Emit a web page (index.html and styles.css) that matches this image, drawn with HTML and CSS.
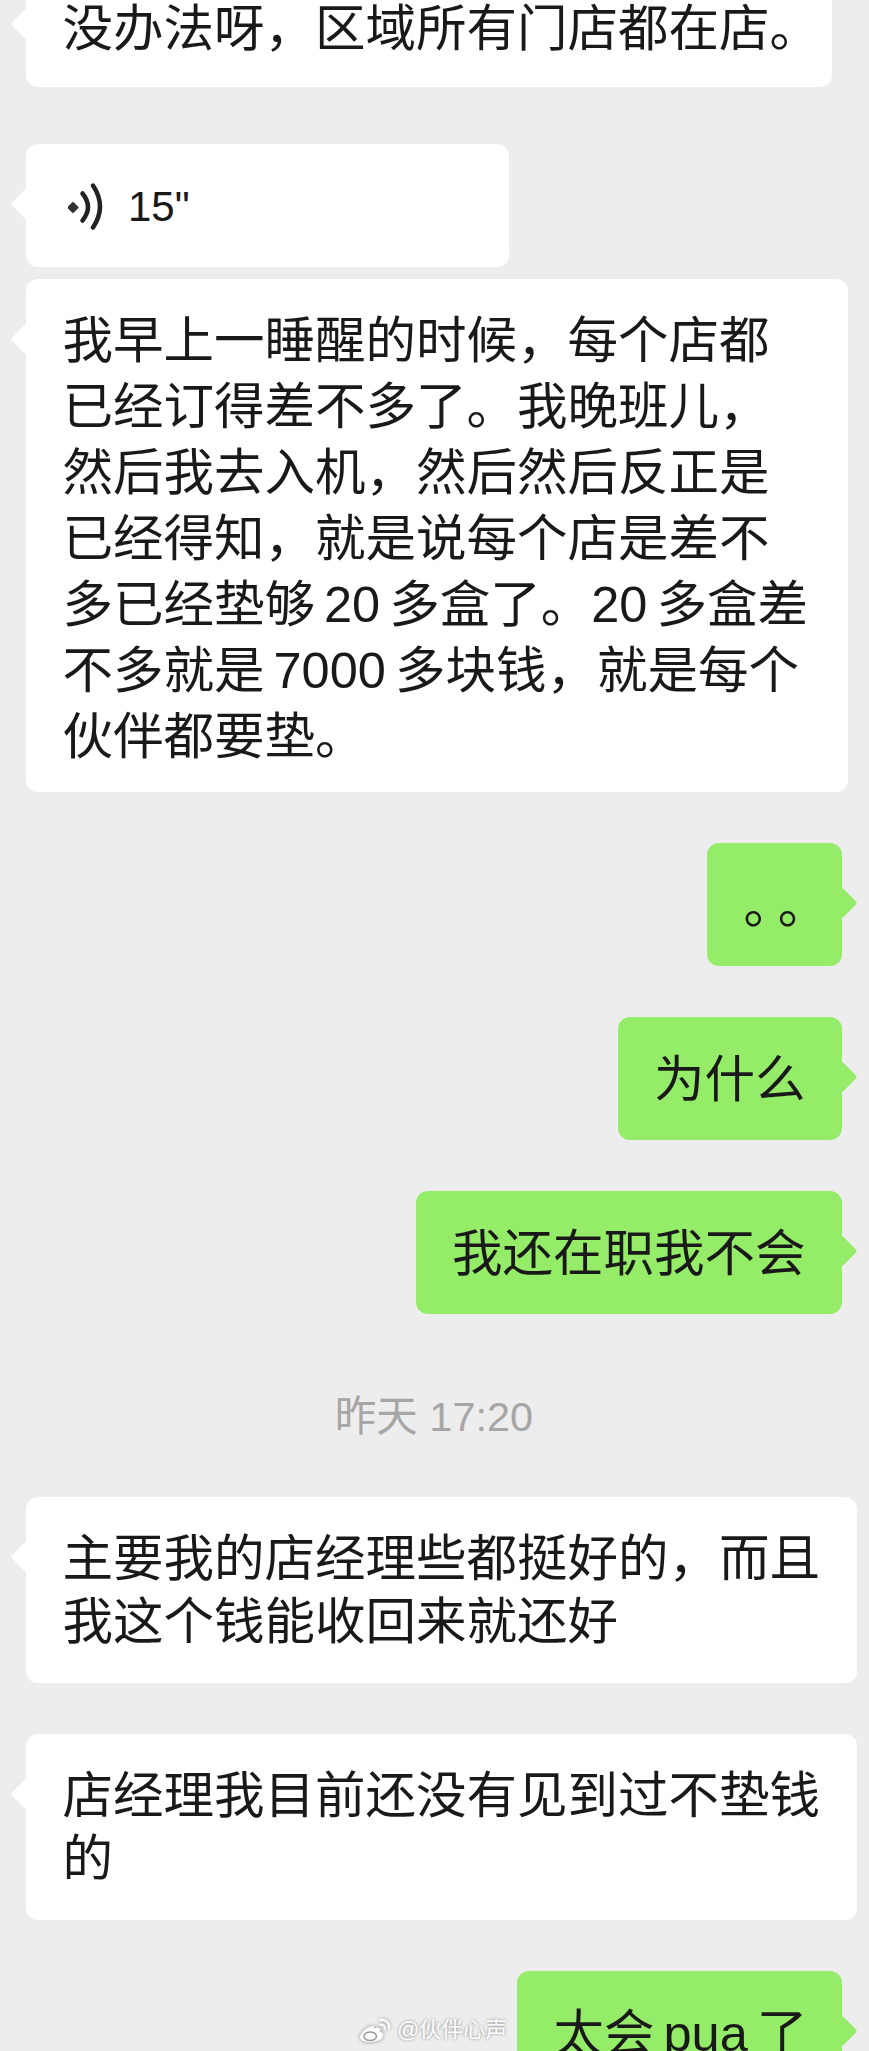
FILE: index.html
```html
<!DOCTYPE html>
<html lang="zh-CN">
<head>
  <meta charset="UTF-8">
  <title>聊天记录</title>
  <link rel="stylesheet" href="styles.css">
</head>
<body>
  <div class="chat">
    <div class="msg msg-in">
      <div class="bubble bubble-trim">没办法呀，区域所有门店都在店。</div>
    </div>

    <div class="msg msg-in msg-voice">
      <div class="bubble voice">
        <svg class="voice-icon" viewBox="0 0 36 48" aria-hidden="true">
          <path class="voice-dot" d="M5 20 L9.5 24.5 L5 29 L0.5 24.5 Z"/>
          <path class="voice-wave" d="M14.5 10.5 Q25.5 24 14.5 37.5"/>
          <path class="voice-wave" d="M25 2.5 Q39 23.5 25 44.5"/>
        </svg>
        <span class="voice-len">15"</span>
      </div>
    </div>
    <div class="msg msg-in msg-same">
      <div class="bubble bubble-wide">我早上一睡醒的时候，每个店都<br>已经订得差不多了。我晚班儿，<br>然后我去入机，然后然后反正是<br>已经得知，就是说每个店是差不<br>多已经垫够 20 多盒了。20 多盒差<br>不多就是 7000 多块钱，就是每个<br>伙伴都要垫。</div>
    </div>

    <div class="msg msg-out">
      <div class="bubble bubble-dots">。。</div>
    </div>
    <div class="msg msg-out">
      <div class="bubble">为什么</div>
    </div>
    <div class="msg msg-out">
      <div class="bubble">我还在职我不会</div>
    </div>

    <div class="time">昨天 17:20</div>

    <div class="msg msg-in msg-after-time">
      <div class="bubble bubble-two">主要我的店经理些都挺好的，而且<br>我这个钱能收回来就还好</div>
    </div>
    <div class="msg msg-in">
      <div class="bubble bubble-two">店经理我目前还没有见到过不垫钱<br>的</div>
    </div>
    <div class="msg msg-out">
      <div class="bubble bubble-last">太会 pua 了</div>
    </div>
  </div>

  <div class="watermark">
    <svg class="weibo" viewBox="0 0 34 27" aria-hidden="true">
      <path class="weibo-body" d="M14 9 C7 11 1 17 1 21 C1 25 7 26 12 26 C19 26 25 23 25 18.5 C25 16 22.5 15.5 21.5 15 C22.5 12.5 21.5 10.5 18 11 L15 12 C15.5 10 15.5 8.5 14 9 Z"/>
      <ellipse class="weibo-eye" cx="11.5" cy="20" rx="6.5" ry="4.5"/>
      <path class="weibo-arc" d="M22 3 C27 2 32 6 31 12"/>
      <path class="weibo-arc" d="M22 8 C25 7.5 27 9.5 26.5 12"/>
    </svg>
    <span>@伙伴心声</span>
  </div>
</body>
</html>
```

FILE: styles.css
```css
* {
  box-sizing: border-box;
}

html,
body {
  margin: 0;
  height: 2051px;
  overflow: hidden;
}

body {
  position: relative;
  background: #ededed;
  color: #191919;
  font-family: "Liberation Sans", "Noto Sans CJK SC", sans-serif;
}

/* first bubble is cut by the top of the screenshot */
.chat {
  display: flex;
  flex-direction: column;
  margin-top: -36px;
  padding: 0 27px 0 26px;
}

.msg {
  display: flex;
  margin-top: 51px;
}

.msg:first-child {
  margin-top: 0;
}

.msg-voice {
  margin-top: 57px;
}

.msg-same {
  margin-top: 12px;
}

.msg-after-time {
  margin-top: 54px;
}

.msg-out {
  justify-content: flex-end;
}

.bubble {
  position: relative;
  flex: none;
  display: flex;
  align-items: center;
  min-height: 123px;
  padding: 27px 36.5px 24px;
  border-radius: 12px;
  background: #fff;
  font-size: 50.5px;
  line-height: 66px;
  white-space: nowrap;
  word-spacing: -5px;
}

.bubble::before {
  content: "";
  position: absolute;
  top: 49px;
  width: 22px;
  height: 22px;
  border-radius: 3px;
  background: inherit;
  transform: rotate(45deg);
}

.msg-in .bubble::before {
  left: -11px;
}

.msg-out .bubble {
  background: #95ec69;
}

.msg-out .bubble::before {
  right: -11px;
}

.bubble-trim {
  width: 806px;
  padding-top: 31px;
  padding-bottom: 24px;
}

.bubble-wide {
  width: 822px;
  padding-top: 28.5px;
  padding-bottom: 22.5px;
}

.bubble-two {
  padding-top: 30px;
  padding-bottom: 30px;
  line-height: 63px;
}

.bubble-dots {
  width: 135px;
  letter-spacing: 9px;
}

.bubble-last {
  width: 325px;
}

.voice {
  width: 483px;
  padding-left: 42px;
}

.voice-icon {
  flex: none;
  width: 36px;
  height: 48px;
}

.voice-dot {
  fill: #333;
  stroke: #333;
  stroke-width: 2px;
  stroke-linejoin: round;
}

.voice-wave {
  fill: none;
  stroke: #222;
  stroke-width: 4.5px;
  stroke-linecap: round;
}

.voice-len {
  margin-left: 24px;
  font-size: 42px;
}

.time {
  margin-top: 77px;
  height: 52px;
  color: #a6a6a6;
  font-size: 41.5px;
  line-height: 52px;
  text-align: center;
}

.watermark {
  position: absolute;
  left: 359px;
  top: 2015px;
  display: flex;
  align-items: center;
  gap: 5px;
  color: #fff;
  font-size: 22px;
  line-height: 30px;
  text-shadow: 0 0 3px rgba(0, 0, 0, 0.45);
}

.weibo {
  width: 33px;
  height: 26px;
  filter: drop-shadow(0 0 2px rgba(0, 0, 0, 0.4));
}

.weibo-body {
  fill: #fff;
}

.weibo-eye {
  fill: none;
  stroke: #999;
  stroke-width: 1.5px;
}

.weibo-arc {
  fill: none;
  stroke: #fff;
  stroke-width: 2px;
  stroke-linecap: round;
}
```
